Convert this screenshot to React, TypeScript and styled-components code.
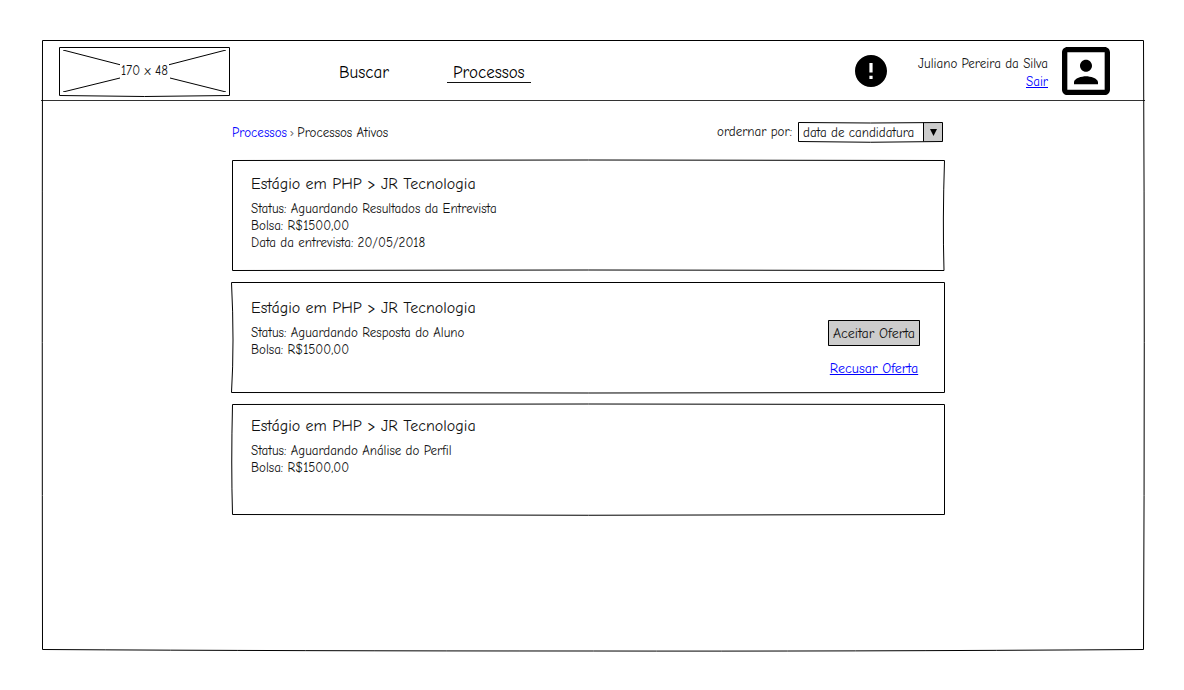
import React from "react";
import styled, { createGlobalStyle } from "styled-components";

const GlobalStyle = createGlobalStyle`
  *, *::before, *::after { box-sizing: border-box; }
  body {
    margin: 0;
    background: #fff;
    color: #111;
    font: 13px/18px "Comic Sans MS", "Comic Neue", Lato, "Liberation Sans", sans-serif;
  }
  h2, p, ul { margin: 0; padding: 0; }
  button, select { font: inherit; color: inherit; }
`;

const Outline = styled.svg`
  position: absolute;
  inset: 0;
  width: 100%;
  height: 100%;
  overflow: visible;
  pointer-events: none;
  fill: none;
  stroke: #000;
  stroke-width: 1;

  path { vector-effect: non-scaling-stroke; }
`;

const frames = {
  page: "M0 0H1101Q1102.5 300 1101 609Q800 611 551 610.5Q250 610.5 0 609Q-.5 300 0 0Z",
  logo: "M0 0H170V48Q85 50 0 48Z",
  first: "M0 0Q356 -1 712 0Q710 60 711.5 110Q356 109 0 110Z",
  second: "M-1 0H712V110Q356 111 -1 110Q2 60 -1 0Z",
  third: "M0 0Q356 -1 712 0V110Q356 111.5 0 110Q-1.5 60 0 0Z",
  select: "M0 0Q72 1 144 0V19Q72 20.5 0 19ZM125 0V19",
  button: "M0 0H91V25H0Z",
};

const boxes: Record<keyof typeof frames, string> = {
  page: "-.5 -.5 1102 610",
  logo: "-.5 -.5 171 49",
  first: "-.5 -.5 713 111",
  second: "-.5 -.5 713 111",
  third: "-.5 -.5 713 111",
  select: "-.5 -.5 145 20",
  button: "-.5 -.5 92 26",
};

function HandDrawn({ shape }: { shape: keyof typeof frames }) {
  return (
    <Outline viewBox={boxes[shape]} preserveAspectRatio="none" aria-hidden="true">
      <path d={frames[shape]} />
    </Outline>
  );
}

const Shell = styled.div`
  display: grid;
  min-height: 100vh;
  padding: 40px 40px 40px 42px;
`;

const Page = styled.div`
  position: relative;
`;

const Header = styled.header`
  display: flex;
  align-items: center;
  height: 61px;
  margin: 0 -1px;
  padding: 2px 35px 0 18px;
  border-bottom: 1px solid #333;
`;

const Logo = styled.div`
  position: relative;
  display: grid;
  place-items: center;
  width: 171px;
  height: 49px;

  > svg:first-child { grid-area: 1 / 1; width: 163px; height: 42px; }
  > span { grid-area: 1 / 1; padding: 0 1px; background: #fff; }
`;

const Nav = styled.nav`
  display: flex;
  gap: 52px;
  margin-left: 103px;
  padding-top: 3px;
`;

const NavLink = styled.a<{ $active?: boolean }>`
  padding: 0 6px;
  border-bottom: 1px solid ${(p) => (p.$active ? "#111" : "transparent")};
  color: #000;
  font-size: 17px;
  line-height: 19px;
  text-decoration: none;
`;

const Account = styled.div`
  display: flex;
  align-items: center;
  margin-left: auto;
`;

const AlertButton = styled.button`
  display: flex;
  padding: 0;
  border: 0;
  background: none;
`;

const User = styled.div`
  display: flex;
  flex-direction: column;
  align-items: flex-end;
  margin: 4px 14px 0 31px;
`;

const Link = styled.a<{ $plain?: boolean }>`
  color: #00f;
  text-decoration: ${(p) => (p.$plain ? "none" : "underline")};
`;

const Main = styled.main`
  padding: 21px 199px 40px 190px;
`;

const Toolbar = styled.div`
  display: flex;
  justify-content: space-between;
  align-items: center;
  padding-right: 2px;
`;

const Crumbs = styled.nav`
  display: flex;
  gap: 3px;
  padding-top: 2px;
`;

const Separator = styled.span`
  color: #666;
`;

const Sort = styled.div`
  display: flex;
  align-items: center;
  gap: 6px;
`;

const SelectBox = styled.div`
  position: relative;
  display: flex;
  align-items: stretch;
  width: 145px;
  height: 20px;
  background: linear-gradient(to left, #ccc 19px, #fff 19px);

  select {
    flex: 1;
    padding: 2px 24px 0 5px;
    border: 0;
    appearance: none;
    background: none;
    line-height: 18px;
  }
`;

const Arrow = styled.svg`
  position: absolute;
  right: 6px;
  top: 7px;
`;

const Cards = styled.ul`
  display: grid;
  gap: 11px;
  margin-top: 18px;
  list-style: none;
`;

const Card = styled.li<{ $top: number }>`
  position: relative;
  display: flex;
  justify-content: space-between;
  min-height: 111px;
  padding: ${(p) => p.$top}px 25px 12px 19px;
`;

const Title = styled.h2`
  margin-bottom: 4px;
  font-size: 16px;
  font-weight: 400;
  line-height: 24px;
`;

const Line = styled.p`
  line-height: 17px;
`;

const Actions = styled.div`
  display: flex;
  flex-direction: column;
  align-items: center;
  gap: 14px;
  padding-top: 24px;
  font-size: 14px;
`;

const Accept = styled.button`
  position: relative;
  width: 92px;
  height: 26px;
  padding: 2px 0 0;
  border: 0;
  background: #ccc;
  white-space: nowrap;
`;

type Process = {
  shape: "first" | "second" | "third";
  top: number;
  lines: string[];
  offer?: boolean;
};

const processes: Process[] = [
  {
    shape: "first",
    top: 12,
    lines: [
      "Status: Aguardando Resultados da Entrevista",
      "Bolsa: R$1500,00",
      "Data da entrevista: 20/05/2018",
    ],
  },
  {
    shape: "second",
    top: 14,
    lines: ["Status: Aguardando Resposta do Aluno", "Bolsa: R$1500,00"],
    offer: true,
  },
  {
    shape: "third",
    top: 10,
    lines: ["Status: Aguardando Análise do Perfil", "Bolsa: R$1500,00"],
  },
];

export default function App() {
  return (
    <>
      <GlobalStyle />
      <Shell>
        <Page>
          <HandDrawn shape="page" />
          <Header>
            <Logo>
              <svg viewBox="0 0 163 42" fill="none" stroke="#000" aria-hidden="true">
                <path d="M0 0L62 16M163 0L101 16M0 42L57 28M163 42L107 28" />
              </svg>
              <span>170 x 48</span>
              <HandDrawn shape="logo" />
            </Logo>
            <Nav aria-label="Principal">
              <NavLink href="#buscar">Buscar</NavLink>
              <NavLink href="#processos" $active>Processos</NavLink>
            </Nav>
            <Account>
              <AlertButton type="button" aria-label="Avisos">
                <svg width="32" height="32" viewBox="2 2 20 20">
                  <path d="M12 2C6.48 2 2 6.48 2 12s4.48 10 10 10 10-4.48 10-10S17.52 2 12 2zm1 15h-2v-2h2v2zm0-4h-2V7h2v6z" />
                </svg>
              </AlertButton>
              <User>
                <span>Juliano Pereira da Silva</span>
                <Link href="#sair">Sair</Link>
              </User>
              <svg width="48" height="48" viewBox="3 3 18 18" role="img" aria-label="Perfil">
                <path d="M12 12.25c1.24 0 2.25-1.01 2.25-2.25S13.24 7.75 12 7.75 9.75 8.76 9.75 10s1.01 2.25 2.25 2.25zm4.5 4c0-1.5-3-2.25-4.5-2.25s-4.5.75-4.5 2.25V17h9v-.75zM19 3H5c-1.1 0-2 .9-2 2v14c0 1.1.9 2 2 2h14c1.1 0 2-.9 2-2V5c0-1.1-.9-2-2-2zm0 16H5V5h14v14z" />
              </svg>
            </Account>
          </Header>
          <Main>
            <Toolbar>
              <Crumbs aria-label="Trilha">
                <Link href="#processos" $plain>Processos</Link>
                <Separator>›</Separator>
                <span>Processos Ativos</span>
              </Crumbs>
              <Sort>
                <label htmlFor="order">ordernar por:</label>
                <SelectBox>
                  <select id="order" defaultValue="data">
                    <option value="data">data de candidatura</option>
                  </select>
                  <Arrow width="7" height="7" viewBox="0 0 7 7" aria-hidden="true">
                    <path d="M0 0H7L3.5 7Z" />
                  </Arrow>
                  <HandDrawn shape="select" />
                </SelectBox>
              </Sort>
            </Toolbar>
            <Cards>
              {processes.map((item) => (
                <Card key={item.shape} $top={item.top}>
                  <HandDrawn shape={item.shape} />
                  <div>
                    <Title>Estágio em PHP &gt; JR Tecnologia</Title>
                    {item.lines.map((line) => (
                      <Line key={line}>{line}</Line>
                    ))}
                  </div>
                  {item.offer && (
                    <Actions>
                      <Accept type="button">
                        Aceitar Oferta
                        <HandDrawn shape="button" />
                      </Accept>
                      <Link href="#recusar">Recusar Oferta</Link>
                    </Actions>
                  )}
                </Card>
              ))}
            </Cards>
          </Main>
        </Page>
      </Shell>
    </>
  );
}
